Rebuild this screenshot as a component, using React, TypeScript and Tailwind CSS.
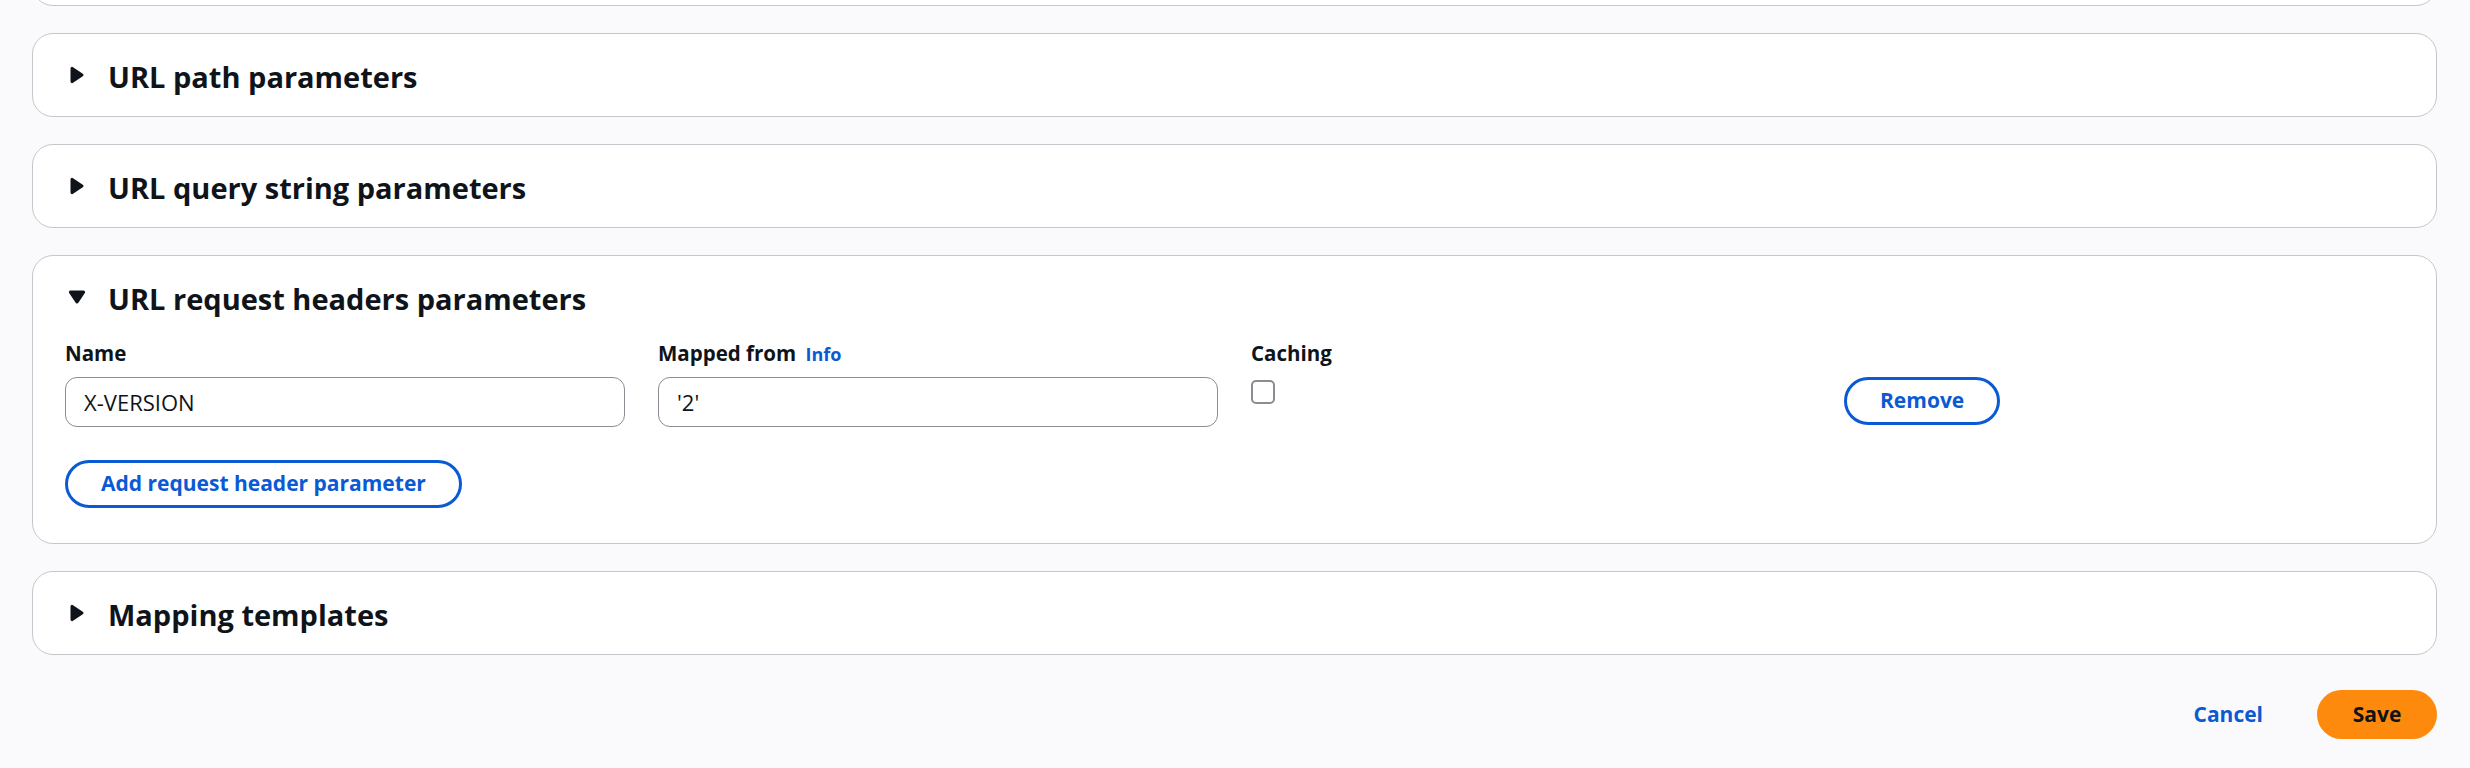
import React from "react"

const font = "font-['Open_Sans','Lato',sans-serif]"

function Caret({ open }: { open: boolean }) {
  return (
    <svg viewBox="0 0 16 16" className="h-[26px] w-[26px] shrink-0" aria-hidden>
      <path
        d={open ? "M4 5h8l-4 6-4-6z" : "M5 4v8l6-4-6-4z"}
        fill="#0f141a"
        stroke="#0f141a"
        strokeWidth={2}
        strokeLinejoin="round"
      />
    </svg>
  )
}

function SectionHeader({ title, open }: { title?: string; open: boolean }) {
  return (
    <div className="flex h-[82px] items-center gap-[18px] px-[31px]">
      <Caret open={open} />
      {title && (
        <h2 className="pt-[4px] text-[29px] font-bold leading-[36px] text-[#0f141a]">{title}</h2>
      )}
    </div>
  )
}

function CollapsedPanel({ title, className = "" }: { title?: string; className?: string }) {
  return (
    <div className={`rounded-[21px] border border-[#c6c6cd] bg-white ${className}`}>
      <SectionHeader title={title} open={false} />
    </div>
  )
}

function OutlineButton({ label }: { label: string }) {
  return (
    <button className="h-[48px] rounded-full border-[3px] border-[#0a5ad4] bg-white px-[33px] text-[21px] font-bold text-[#0a5ad4]">
      {label}
    </button>
  )
}

export default function App() {
  return (
    <div className={`min-h-screen bg-[#fafafc] px-[32px] pr-[33px] ${font} text-[#0f141a]`}>
      <div className="flex flex-col gap-[27px]">
        {/* section above, scrolled mostly out of view */}
        <CollapsedPanel className="-mt-[78px]" />
        <CollapsedPanel title="URL path parameters" />
        <CollapsedPanel title="URL query string parameters" />

        <div className="rounded-[21px] border border-[#c6c6cd] bg-white">
          <SectionHeader title="URL request headers parameters" open />
          <div className="px-[32px] pb-[35px] pt-[3px]">
            <div className="grid grid-cols-4 gap-x-[33px] gap-y-[11px]">
              <label className="text-[20.5px] font-bold leading-[24px]">Name</label>
              <label className="text-[20.5px] font-bold leading-[24px]">
                Mapped from <span className="ml-[4px] text-[18px] text-[#0a5ad4]">Info</span>
              </label>
              <label className="text-[20.5px] font-bold leading-[24px]">Caching</label>
              <div />

              <input
                readOnly
                value="X-VERSION"
                className="h-[50px] w-full rounded-[12px] border border-[#8c8c94] bg-white px-[18px] text-[22px] outline-none"
              />
              <input
                readOnly
                value="'2'"
                className="h-[50px] w-full rounded-[12px] border border-[#8c8c94] bg-white px-[18px] text-[22px] outline-none"
              />
              <div className="pt-[3px]">
                <div className="h-[24px] w-[24px] rounded-[5px] border-2 border-[#8c8c94] bg-white" />
              </div>
              <div>
                <OutlineButton label="Remove" />
              </div>
            </div>
            <div className="mt-[33px]">
              <OutlineButton label="Add request header parameter" />
            </div>
          </div>
        </div>

        <CollapsedPanel title="Mapping templates" />
      </div>

      <div className="mt-[35px] flex items-center justify-end gap-[18px]">
        <button className="h-[49px] px-[36px] text-[21px] font-bold text-[#0a5ad4]">Cancel</button>
        <button className="h-[49px] w-[120px] rounded-full bg-[#fd8a0c] text-[21px] font-bold text-[#0f141a]">
          Save
        </button>
      </div>
    </div>
  )
}
